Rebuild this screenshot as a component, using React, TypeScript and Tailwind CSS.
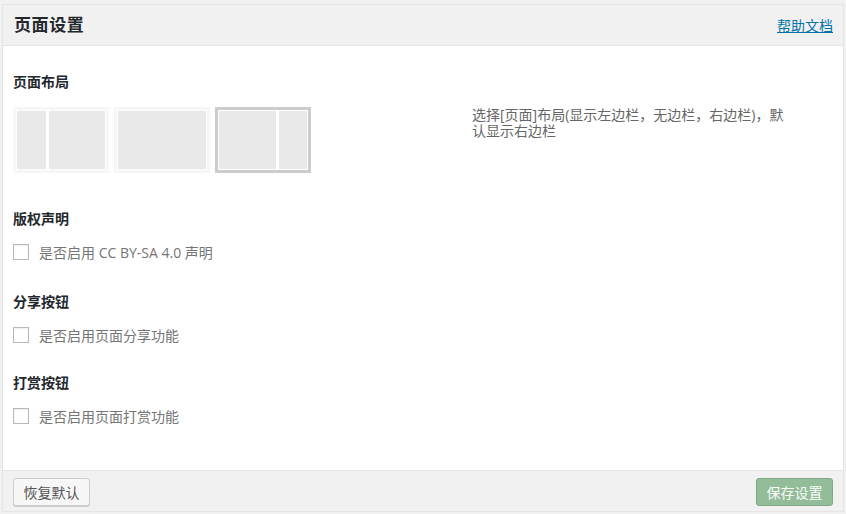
const font = { fontFamily: '"Open Sans", "Noto Sans CJK SC", sans-serif' };

function LayoutBox({ kind, selected }: { kind: "left" | "none" | "right"; selected?: boolean }) {
  return (
    <div
      className={`w-[96px] h-[66px] border-[3px] bg-white p-px flex gap-[3px] ${
        selected ? "border-[#cccccc]" : "border-[#f7f7f7]"
      }`}
    >
      {kind === "left" && <div className="w-[29px] bg-[#e9e9e9]" />}
      <div className="flex-1 bg-[#e9e9e9]" />
      {kind === "right" && <div className="w-[28px] bg-[#e9e9e9]" />}
    </div>
  );
}

function CheckRow({ label }: { label: string }) {
  return (
    <label className="mt-[13px] flex items-center gap-[10px] h-[20px]">
      <span className="w-[16px] h-[16px] border border-[#b4b9be] bg-white shadow-[inset_0_1px_2px_rgba(0,0,0,0.07)]" />
      <span className="text-[14px] text-[#757575]">{label}</span>
    </label>
  );
}

export default function App() {
  return (
    <div className="h-screen bg-[#f1f1f1] px-[2px] pt-[4px]" style={font}>
      <div className="border border-[#e5e5e5] bg-white flex flex-col">
        {/* 头部 */}
        <div className="h-[41px] bg-[#f1f1f1] border-b border-[#e5e5e5] flex items-center justify-between pl-[11px] pr-[10px]">
          <h2 className="text-[17px] font-bold text-[#23282d] tracking-[0.6px]">页面设置</h2>
          <a href="#" className="text-[14px] text-[#0073aa] underline">
            帮助文档
          </a>
        </div>

        {/* 内容 */}
        <div className="h-[424px] pl-[10px] pt-[26px]">
          <h3 className="text-[14px] leading-[20px] font-bold text-[#23282d]">页面布局</h3>
          <div className="mt-[15px] flex">
            <div className="w-[459px] flex gap-[5px]">
              <LayoutBox kind="left" />
              <LayoutBox kind="none" />
              <LayoutBox kind="right" selected />
            </div>
            <p className="w-[318px] text-[14px] leading-[16px] text-[#666666]">
              选择[页面]布局(显示左边栏，无边栏，右边栏)，默认显示右边栏
            </p>
          </div>

          <h3 className="mt-[36px] text-[14px] leading-[20px] font-bold text-[#23282d]">版权声明</h3>
          <CheckRow label="是否启用 CC BY-SA 4.0 声明" />

          <h3 className="mt-[30px] text-[14px] leading-[20px] font-bold text-[#23282d]">分享按钮</h3>
          <CheckRow label="是否启用页面分享功能" />

          <h3 className="mt-[28px] text-[14px] leading-[20px] font-bold text-[#23282d]">打赏按钮</h3>
          <CheckRow label="是否启用页面打赏功能" />
        </div>

        {/* 底部 */}
        <div className="h-[41px] bg-[#f1f1f1] border-t border-[#e5e5e5] flex items-start justify-between pt-[7px] px-[10px]">
          <button className="h-[28px] w-[77px] rounded-[3px] border border-[#cccccc] bg-[#f7f7f7] shadow-[0_1px_0_#cccccc] text-[14px] text-[#555555]">
            恢复默认
          </button>
          <button className="h-[28px] w-[77px] rounded-[3px] border border-[#7fa985] bg-[#93bc98] text-[14px] text-[#f8fbf8]">
            保存设置
          </button>
        </div>
      </div>
    </div>
  );
}
